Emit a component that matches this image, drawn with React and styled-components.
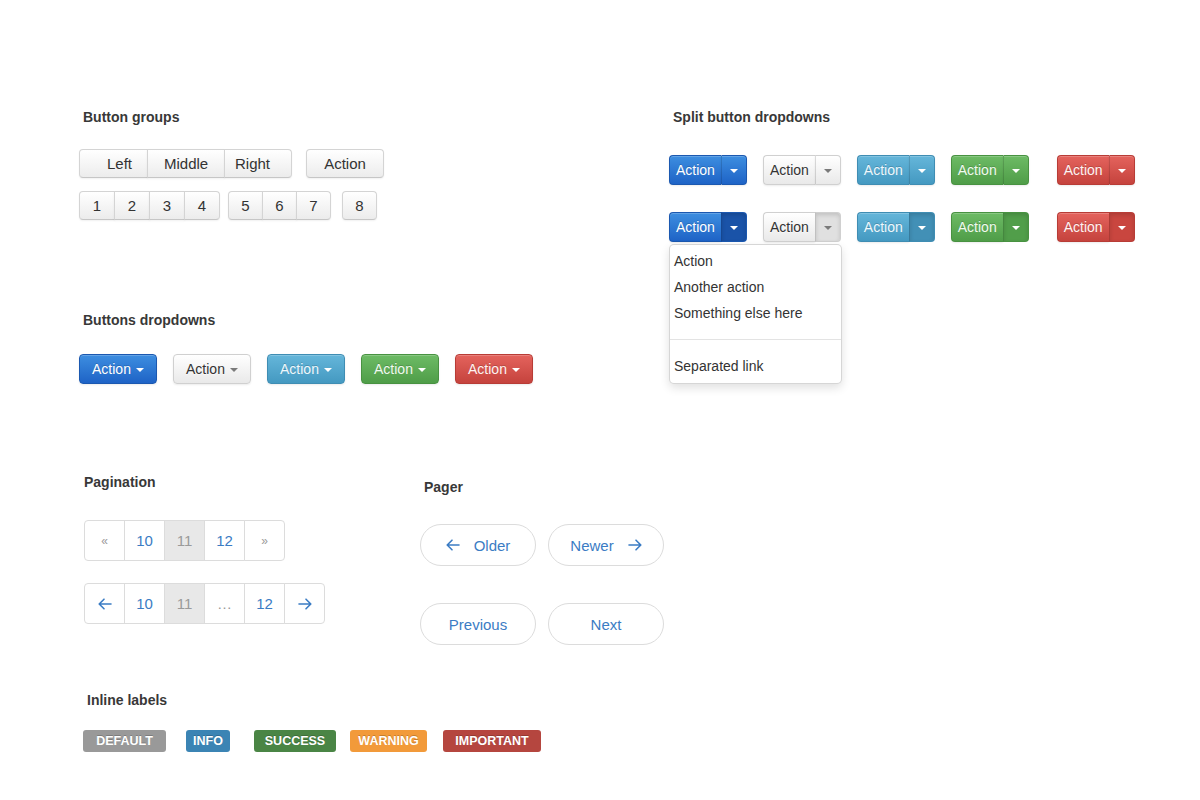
import React from "react";
import styled, { createGlobalStyle, css } from "styled-components";

const GlobalStyle = createGlobalStyle`
  html, body { margin: 0; padding: 0; background: #fff; }
  body {
    font-family: "Liberation Sans", Arial, sans-serif;
    color: #333;
    -webkit-font-smoothing: antialiased;
  }
  * { box-sizing: border-box; }
`;

const tones = {
  primary: { top: "#3d8ee0", bottom: "#1e63c6", border: "#1b58b0", text: "#ffffff", caret: "#ffffff", active: "#1a53a8" },
  default: { top: "#ffffff", bottom: "#e9e9e9", border: "#d0d0d0", text: "#333333", caret: "#7a7a7a", active: "#e0e0e0" },
  info: { top: "#65b6da", bottom: "#4499c1", border: "#3f8db3", text: "#eef8fc", caret: "#ffffff", active: "#4290b6" },
  success: { top: "#6dbb65", bottom: "#4f9d48", border: "#489241", text: "#f0faef", caret: "#ffffff", active: "#519e4a" },
  danger: { top: "#e4635d", bottom: "#c5433d", border: "#b83c36", text: "#fff3f2", caret: "#ffffff", active: "#c9463f" },
};

const Page = styled.main`
  width: 1200px;
  height: 800px;
  padding: 109px 0 0 79px;
  overflow: hidden;
`;

const TopGrid = styled.div`
  display: grid;
  grid-template-columns: 590px 1fr;
  align-items: start;
`;

const Column = styled.div`
  display: flex;
  flex-direction: column;
`;

const Section = styled.section`
  display: flex;
  flex-direction: column;
  margin-top: ${(p) => p.$top || 0}px;
  width: ${(p) => (p.$w ? `${p.$w}px` : "auto")};
`;

const Heading = styled.h3`
  margin: 0 0 ${(p) => p.$gap}px ${(p) => p.$indent ?? 4}px;
  font-size: 14px;
  line-height: 16px;
  font-weight: 700;
  color: #383838;
`;

/* ---------- Button groups ---------- */

const Toolbar = styled.div`
  display: flex;
  align-items: flex-start;
  margin-bottom: ${(p) => p.$below || 0}px;
`;

const BtnGroup = styled.div`
  display: flex;
  margin-left: ${(p) => p.$gapBefore || 0}px;
  & > * + * { margin-left: -1px; }
  & > *:first-child { border-top-left-radius: 4px; border-bottom-left-radius: 4px; }
  & > *:last-child { border-top-right-radius: 4px; border-bottom-right-radius: 4px; }
`;

const GroupButton = styled.button`
  width: ${(p) => p.$w}px;
  height: 29px;
  padding: 0 0 0 ${(p) => p.$pl ?? 0}px;
  text-align: ${(p) => (p.$pl != null ? "left" : "center")};
  font-family: inherit;
  font-size: 15px;
  line-height: 27px;
  color: #333;
  background: linear-gradient(#ffffff, #ececec);
  border: 1px solid #d4d4d4;
  border-bottom-color: #c6c6c6;
  border-radius: 0;
  box-shadow: inset 0 1px 0 rgba(255, 255, 255, 0.4), 0 1px 2px rgba(0, 0, 0, 0.06);
`;

/* ---------- Coloured buttons ---------- */

const toneSurface = css`
  background: linear-gradient(${(p) => tones[p.$tone].top}, ${(p) => tones[p.$tone].bottom});
  border: 1px solid ${(p) => tones[p.$tone].border};
  color: ${(p) => tones[p.$tone].text};
  text-shadow: ${(p) => (p.$tone === "default" ? "0 1px 0 rgba(255,255,255,0.6)" : "0 -1px 0 rgba(0,0,0,0.18)")};
  box-shadow: inset 0 1px 0 rgba(255, 255, 255, 0.2), 0 1px 2px rgba(0, 0, 0, 0.08);
`;

const Caret = styled.span`
  display: inline-block;
  width: 0;
  height: 0;
  border-top: 4px solid ${(p) => tones[p.$tone].caret};
  border-left: 4px solid transparent;
  border-right: 4px solid transparent;
  margin-left: ${(p) => p.$ml || 0}px;
  margin-top: 2px;
`;

const ButtonRow = styled.div`
  display: flex;
  gap: 16px;
  margin-bottom: ${(p) => p.$below || 0}px;
`;

const DropButton = styled.button`
  ${toneSurface};
  width: 78px;
  height: 30px;
  padding: 0;
  display: inline-flex;
  align-items: center;
  justify-content: center;
  font-family: inherit;
  font-size: 14px;
  border-radius: 4px;
`;

const SplitWrap = styled.div`
  position: relative;
  display: flex;
  margin-left: ${(p) => p.$extra || 0}px;
`;

const SplitMain = styled.button`
  ${toneSurface};
  height: 30px;
  padding: 0 6px;
  border-right: none;
  border-radius: 4px 0 0 4px;
  font-family: inherit;
  font-size: 14px;
  line-height: 28px;
`;

const SplitCaret = styled.button`
  ${toneSurface};
  width: 26px;
  height: 30px;
  padding: 0;
  display: inline-flex;
  align-items: center;
  justify-content: center;
  border-left-color: rgba(0, 0, 0, 0.14);
  border-radius: 0 4px 4px 0;
  ${(p) =>
    p.$active &&
    css`
      background: ${tones[p.$tone].active};
      box-shadow: inset 0 2px 4px rgba(0, 0, 0, 0.14);
    `}
`;

const Menu = styled.ul`
  position: absolute;
  top: calc(100% + 2px);
  left: 0;
  z-index: 5;
  width: 173px;
  margin: 0;
  padding: 3px 0 4px;
  list-style: none;
  background: #fff;
  border: 1px solid rgba(0, 0, 0, 0.16);
  border-radius: 5px;
  box-shadow: 0 4px 10px rgba(0, 0, 0, 0.12);
`;

const MenuItem = styled.li`
  padding: 0 0 0 4px;
  font-size: 14px;
  line-height: 26px;
  color: #333;
  white-space: nowrap;
`;

const MenuDivider = styled.li`
  height: 1px;
  margin: 13px 0;
  background: #e3e3e3;
`;

/* ---------- Pagination ---------- */

const BottomRow = styled.div`
  display: flex;
  align-items: flex-start;
  margin-top: 90px;
`;

const PageList = styled.ul`
  display: flex;
  margin: 0 0 ${(p) => p.$below || 0}px 5px;
  padding: 0;
  list-style: none;
  & > * + * { margin-left: -1px; }
  & > *:first-child { border-radius: 4px 0 0 4px; }
  & > *:last-child { border-radius: 0 4px 4px 0; }
`;

const PageCell = styled.li`
  width: 41px;
  height: 41px;
  display: flex;
  align-items: center;
  justify-content: center;
  border: 1px solid #dcdcdc;
  font-size: ${(p) => (p.$small ? 12 : 15)}px;
  color: ${(p) => (p.$muted ? "#9a9a9a" : "#3b7cc4")};
  background: ${(p) => (p.$current ? "#e8e8e8" : "#fff")};
`;

/* ---------- Pager ---------- */

const PagerRow = styled.div`
  display: flex;
  gap: 12px;
  margin-bottom: ${(p) => p.$below || 0}px;
`;

const PagerButton = styled.a`
  width: 116px;
  height: 42px;
  display: inline-flex;
  align-items: center;
  justify-content: center;
  gap: 14px;
  border: 1px solid #dcdcdc;
  border-radius: 21px;
  background: #fff;
  font-size: 15px;
  color: #3b7cc4;
  text-decoration: none;
`;

const Arrow = ({ dir = "left" }) => (
  <svg width="14" height="12" viewBox="0 0 14 12" fill="none" stroke="#3b7cc4" strokeWidth="1.6" strokeLinecap="round" strokeLinejoin="round">
    {dir === "left" ? <path d="M13 6H1.5M6 1.2 1.2 6 6 10.8" /> : <path d="M1 6h11.5M8 1.2 12.8 6 8 10.8" />}
  </svg>
);

/* ---------- Labels ---------- */

const labelColors = {
  default: "#999999",
  info: "#3b84b4",
  success: "#4a8545",
  warning: "#f29a3a",
  important: "#b5463f",
};

const LabelRow = styled.div`
  display: flex;
  margin-left: 4px;
`;

const Label = styled.span`
  width: ${(p) => p.$w}px;
  height: 22px;
  margin-left: ${(p) => p.$ml}px;
  display: inline-flex;
  align-items: center;
  justify-content: center;
  border-radius: 3px;
  background: ${(p) => labelColors[p.$kind]};
  color: #fff;
  font-size: 12.5px;
  font-weight: 700;
  text-transform: uppercase;
  text-shadow: 0 -1px 0 rgba(0, 0, 0, 0.2);
`;

const tonesOrder = ["primary", "default", "info", "success", "danger"];

const labels = [
  { kind: "default", text: "Default", w: 83, ml: 0 },
  { kind: "info", text: "Info", w: 44, ml: 20 },
  { kind: "success", text: "Success", w: 82, ml: 24 },
  { kind: "warning", text: "Warning", w: 77, ml: 14 },
  { kind: "important", text: "Important", w: 98, ml: 16 },
];

function SplitButton({ tone, active, extra, children }) {
  return (
    <SplitWrap $extra={extra}>
      <SplitMain $tone={tone}>Action</SplitMain>
      <SplitCaret $tone={tone} $active={active}>
        <Caret $tone={tone} />
      </SplitCaret>
      {children}
    </SplitWrap>
  );
}

export default function App() {
  return (
    <>
      <GlobalStyle />
      <Page>
        <TopGrid>
          <Column>
            <Section>
              <Heading $gap={24}>Button groups</Heading>
              <Toolbar $below={13}>
                <BtnGroup>
                  <GroupButton $w={69} $pl={27}>Left</GroupButton>
                  <GroupButton $w={78} $pl={16}>Middle</GroupButton>
                  <GroupButton $w={68} $pl={10}>Right</GroupButton>
                </BtnGroup>
                <BtnGroup $gapBefore={14}>
                  <GroupButton $w={78}>Action</GroupButton>
                </BtnGroup>
              </Toolbar>
              <Toolbar>
                <BtnGroup>
                  {["1", "2", "3", "4"].map((n) => (
                    <GroupButton key={n} $w={36}>{n}</GroupButton>
                  ))}
                </BtnGroup>
                <BtnGroup $gapBefore={8}>
                  {["5", "6", "7"].map((n) => (
                    <GroupButton key={n} $w={35}>{n}</GroupButton>
                  ))}
                </BtnGroup>
                <BtnGroup $gapBefore={11}>
                  <GroupButton $w={35}>8</GroupButton>
                </BtnGroup>
              </Toolbar>
            </Section>

            <Section $top={92}>
              <Heading $gap={26}>Buttons dropdowns</Heading>
              <ButtonRow>
                {tonesOrder.map((t) => (
                  <DropButton key={t} $tone={t}>
                    Action
                    <Caret $tone={t} $ml={5} />
                  </DropButton>
                ))}
              </ButtonRow>
            </Section>
          </Column>

          <Column>
            <Section>
              <Heading $gap={30}>Split button dropdowns</Heading>
              <ButtonRow $below={27}>
                {tonesOrder.map((t) => (
                  <SplitButton key={t} tone={t} extra={t === "danger" ? 12 : 0} />
                ))}
              </ButtonRow>
              <ButtonRow>
                {tonesOrder.map((t) => (
                  <SplitButton key={t} tone={t} active extra={t === "danger" ? 12 : 0}>
                    {t === "primary" && (
                      <Menu>
                        <MenuItem>Action</MenuItem>
                        <MenuItem>Another action</MenuItem>
                        <MenuItem>Something else here</MenuItem>
                        <MenuDivider />
                        <MenuItem>Separated link</MenuItem>
                      </Menu>
                    )}
                  </SplitButton>
                ))}
              </ButtonRow>
            </Section>
          </Column>
        </TopGrid>

        <BottomRow>
          <Section $w={341}>
            <Heading $gap={30} $indent={5}>Pagination</Heading>
            <PageList $below={22}>
              <PageCell $muted $small>«</PageCell>
              <PageCell>10</PageCell>
              <PageCell $current $muted>11</PageCell>
              <PageCell>12</PageCell>
              <PageCell $muted $small>»</PageCell>
            </PageList>
            <PageList>
              <PageCell><Arrow dir="left" /></PageCell>
              <PageCell>10</PageCell>
              <PageCell $current $muted>11</PageCell>
              <PageCell $muted>…</PageCell>
              <PageCell>12</PageCell>
              <PageCell><Arrow dir="right" /></PageCell>
            </PageList>
          </Section>

          <Section $top={5}>
            <Heading $gap={29}>Pager</Heading>
            <PagerRow $below={37}>
              <PagerButton href="#"><Arrow dir="left" />Older</PagerButton>
              <PagerButton href="#">Newer<Arrow dir="right" /></PagerButton>
            </PagerRow>
            <PagerRow>
              <PagerButton href="#">Previous</PagerButton>
              <PagerButton href="#">Next</PagerButton>
            </PagerRow>
          </Section>
        </BottomRow>

        <Section $top={47}>
          <Heading $gap={22} $indent={8}>Inline labels</Heading>
          <LabelRow>
            {labels.map((l) => (
              <Label key={l.kind} $kind={l.kind} $w={l.w} $ml={l.ml}>
                {l.text}
              </Label>
            ))}
          </LabelRow>
        </Section>
      </Page>
    </>
  );
}
